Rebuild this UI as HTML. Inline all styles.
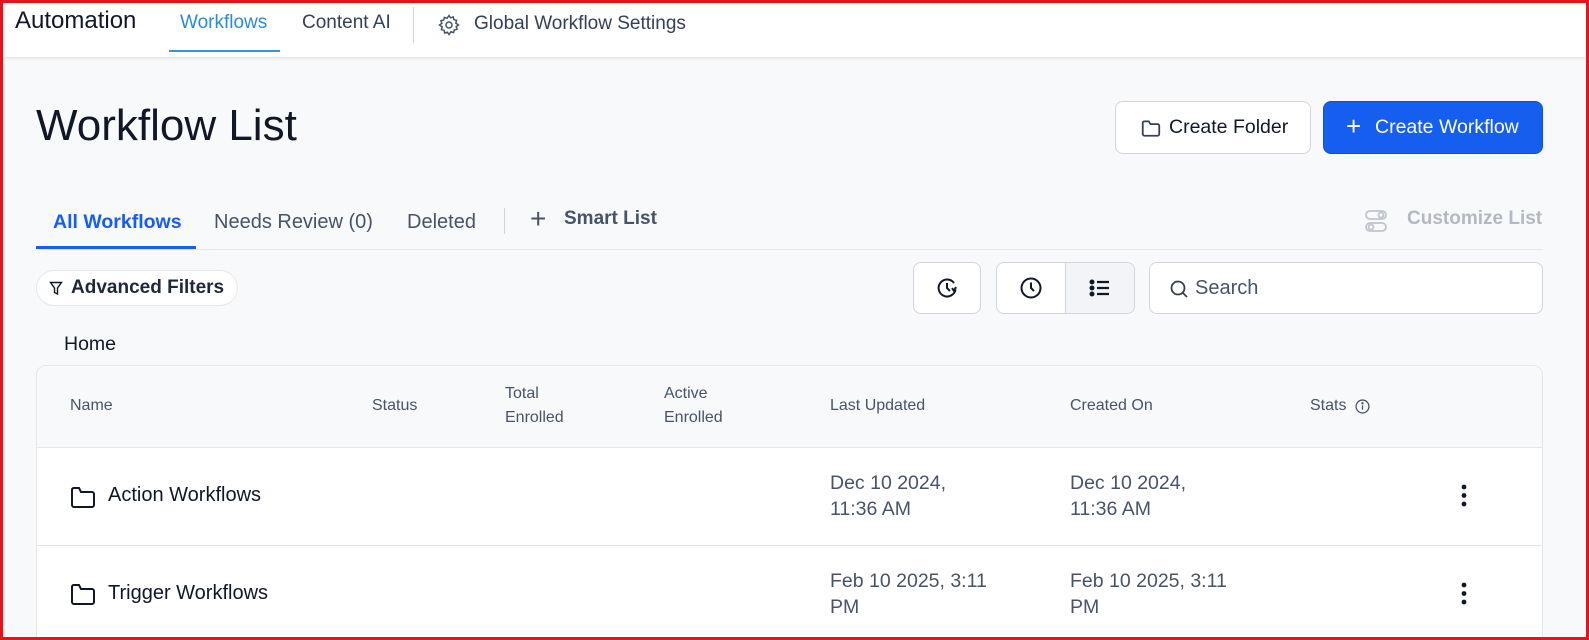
<!DOCTYPE html>
<html style="overflow:hidden;height:640px"><head><meta charset="utf-8"><style>
*{box-sizing:border-box;margin:0;padding:0}
html,body{overflow:hidden}
body{width:1589px;height:640px;background:#f8f9fb;font-family:"Liberation Sans",sans-serif;color:#101828;position:relative}
.a{position:absolute;white-space:nowrap}
.frame{position:absolute;left:0;top:0;width:1589px;height:640px;border:3px solid #e8121b;z-index:10;pointer-events:none}
.hdr{position:absolute;left:0;top:0;width:1589px;height:57px;background:#fff;box-shadow:0 2px 3px rgba(0,0,0,.08)}
.btn{position:absolute;border:1px solid #d0d5dd;background:#fff;border-radius:8px}
.th{font-size:16px;color:#475467;line-height:24px}
.td{font-size:19.5px;color:#475467;line-height:26px}
</style></head><body>
<div class="hdr"></div>
<div class="a" style="left:15px;top:7px;font-size:24px;color:#101828">Automation</div>
<div class="a" style="left:180px;top:12px;font-size:19px;color:#2a8bd0">Workflows</div>
<div class="a" style="left:169px;top:50px;width:111px;height:2px;background:#3a93d5"></div>
<div class="a" style="left:302px;top:12px;font-size:19px;color:#344054">Content AI</div>
<div class="a" style="left:413px;top:7px;width:1px;height:36px;background:#d0d5dd"></div>
<svg class="a" style="left:437px;top:13px" width="24" height="24" viewBox="0 0 24 24" fill="none" stroke="#475467" stroke-width="1.5"><circle cx="12" cy="12" r="3"/><path d="M12 2.5l1.6 2.3 2.7-.8.6 2.7 2.7.7-.8 2.7L21.5 12l-2.3 1.6.8 2.7-2.7.6-.7 2.7-2.7-.8L12 21.5l-1.6-2.3-2.7.8-.6-2.7-2.7-.7.8-2.7L2.5 12l2.3-1.6-.8-2.7 2.7-.6.7-2.7 2.7.8z"/></svg>
<div class="a" style="left:474px;top:13px;font-size:19px;color:#344054">Global Workflow Settings</div>

<div class="a" style="left:36px;top:101px;font-size:44px;color:#101828">Workflow List</div>
<div class="btn" style="left:1115px;top:101px;width:196px;height:53px"></div>
<svg class="a" style="left:1140px;top:117px" width="22" height="22" viewBox="0 0 20 20" fill="none" stroke="#344054" stroke-width="1.6"><path d="M2.5 5V15.5a1.5 1.5 0 001.5 1.5h12a1.5 1.5 0 001.5-1.5V8a1.5 1.5 0 00-1.5-1.5H9.5L8 4H4a1.5 1.5 0 00-1.5 1z"/></svg>
<div class="a" style="left:1169px;top:116px;font-size:19.5px;color:#101828">Create Folder</div>
<div class="a" style="left:1323px;top:101px;width:220px;height:53px;background:#155eef;border-radius:8px;border:1px solid #0f4fd1"></div>
<div class="a" style="left:1346px;top:111px;font-size:26px;color:#fff;font-weight:300">+</div>
<div class="a" style="left:1375px;top:116px;font-size:19.5px;color:#fff">Create Workflow</div>

<div class="a" style="left:53px;top:211px;font-size:19.5px;color:#155eef;font-weight:bold">All Workflows</div>
<div class="a" style="left:36px;top:246px;width:160px;height:3px;background:#155eef"></div>
<div class="a" style="left:214px;top:211px;font-size:20px;color:#475467">Needs Review (0)</div>
<div class="a" style="left:407px;top:211px;font-size:20px;color:#475467">Deleted</div>
<div class="a" style="left:504px;top:208px;width:1px;height:26px;background:#d0d5dd"></div>
<div class="a" style="left:530px;top:203px;font-size:28px;color:#475467;font-weight:300">+</div>
<div class="a" style="left:564px;top:208px;font-size:19px;color:#475467;font-weight:bold">Smart List</div>
<svg class="a" style="left:1364px;top:208px" width="24" height="26" viewBox="0 0 24 26" fill="none" stroke="#c0c4cc" stroke-width="1.8"><rect x="2" y="3" width="20" height="8" rx="4"/><rect x="2" y="15" width="20" height="8" rx="4"/><circle cx="17" cy="7" r="2.5"/><circle cx="7" cy="19" r="2.5"/></svg>
<div class="a" style="left:1407px;top:208px;font-size:19px;color:#b3b8c2;font-weight:bold">Customize List</div>
<div class="a" style="left:37px;top:249px;width:1506px;height:1px;background:#e4e7ec"></div>

<div class="a" style="left:36px;top:270px;width:202px;height:36px;border:1px solid #e4e7ec;border-radius:18px;background:#fff"></div>
<svg class="a" style="left:49px;top:281px" width="14" height="15" viewBox="0 0 14 15" fill="none" stroke="#101828" stroke-width="1.4"><path d="M1.5 1.5h11L8.5 7v6l-3-1.5V7z"/></svg>
<div class="a" style="left:71px;top:277px;font-size:19px;font-weight:bold;color:#1d2939">Advanced Filters</div>

<div class="btn" style="left:913px;top:262px;width:68px;height:52px"></div>
<svg class="a" style="left:935px;top:276px" width="24" height="24" viewBox="0 0 24 24" fill="none" stroke="#101828" stroke-width="2"><path d="M20.5 13.5A8.5 8.5 0 1 1 19 7"/><path d="M12 7v5l3 3"/><path d="M21 11l-2 4-2-3"/></svg>
<div class="btn" style="left:996px;top:262px;width:139px;height:52px;overflow:hidden"><div style="position:absolute;left:68px;top:0;width:71px;height:52px;background:#f2f4f7;border-left:1px solid #d0d5dd"></div></div>
<svg class="a" style="left:1019px;top:276px" width="24" height="24" viewBox="0 0 24 24" fill="none" stroke="#101828" stroke-width="2"><circle cx="12" cy="12" r="9.5"/><path d="M12 6.5V12l3 3"/></svg>
<svg class="a" style="left:1088px;top:276px" width="24" height="24" viewBox="0 0 24 24" fill="none" stroke="#101828" stroke-width="2.2"><circle cx="4" cy="6" r="1.4" fill="#101828"/><circle cx="4" cy="12" r="1.4" fill="#101828"/><circle cx="4" cy="18" r="1.4" fill="#101828"/><path d="M9 6h12M9 12h12M9 18h12"/></svg>
<div class="btn" style="left:1149px;top:262px;width:394px;height:52px"></div>
<svg class="a" style="left:1169px;top:279px" width="20" height="20" viewBox="0 0 20 20" fill="none" stroke="#344054" stroke-width="1.8"><circle cx="9" cy="9" r="6.5"/><path d="M14 14l4 4"/></svg>
<div class="a" style="left:1195px;top:277px;font-size:20px;color:#475467">Search</div>

<div class="a" style="left:64px;top:333px;font-size:19.5px;color:#101828">Home</div>

<div class="a" style="left:36px;top:365px;width:1507px;height:290px;border:1px solid #e4e7ec;border-radius:10px;background:#fff;overflow:hidden">
 <div style="position:absolute;left:0;top:0;right:0;height:82px;background:#f8f9fb;border-bottom:1px solid #e4e7ec"></div>
 <div style="position:absolute;left:0;top:179px;right:0;height:1px;background:#e4e7ec"></div>
</div>
<div class="a th" style="left:70px;top:394px">Name</div>
<div class="a th" style="left:372px;top:394px">Status</div>
<div class="a th" style="left:505px;top:382px">Total<br>Enrolled</div>
<div class="a th" style="left:664px;top:382px">Active<br>Enrolled</div>
<div class="a th" style="left:830px;top:394px">Last Updated</div>
<div class="a th" style="left:1070px;top:394px">Created On</div>
<div class="a th" style="left:1310px;top:394px">Stats</div>
<svg class="a" style="left:1355px;top:399px" width="15" height="15" viewBox="0 0 14 14" fill="none" stroke="#475467" stroke-width="1.2"><circle cx="7" cy="7" r="6"/><path d="M7 6v4"/><circle cx="7" cy="4" r=".5" fill="#475467"/></svg>

<svg class="a" style="left:70px;top:485px" width="26" height="24" viewBox="0 0 26 24" fill="none" stroke="#101828" stroke-width="2"><path d="M2 4.5V20a2 2 0 002 2h18a2 2 0 002-2V9a2 2 0 00-2-2H11L9 3H4a2 2 0 00-2 1.5z"/></svg>
<div class="a" style="left:108px;top:484px;font-size:20px;color:#101828">Action Workflows</div>
<div class="a td" style="left:830px;top:470px">Dec 10 2024,<br>11:36 AM</div>
<div class="a td" style="left:1070px;top:470px">Dec 10 2024,<br>11:36 AM</div>
<svg class="a" style="left:1461px;top:484px" width="6" height="23" viewBox="0 0 6 23" fill="#101828"><circle cx="3" cy="3" r="2.4"/><circle cx="3" cy="11.5" r="2.4"/><circle cx="3" cy="20" r="2.4"/></svg>

<svg class="a" style="left:70px;top:582px" width="26" height="24" viewBox="0 0 26 24" fill="none" stroke="#101828" stroke-width="2"><path d="M2 4.5V20a2 2 0 002 2h18a2 2 0 002-2V9a2 2 0 00-2-2H11L9 3H4a2 2 0 00-2 1.5z"/></svg>
<div class="a" style="left:108px;top:582px;font-size:20px;color:#101828">Trigger Workflows</div>
<div class="a td" style="left:830px;top:568px">Feb 10 2025, 3:11<br>PM</div>
<div class="a td" style="left:1070px;top:568px">Feb 10 2025, 3:11<br>PM</div>
<svg class="a" style="left:1461px;top:582px" width="6" height="23" viewBox="0 0 6 23" fill="#101828"><circle cx="3" cy="3" r="2.4"/><circle cx="3" cy="11.5" r="2.4"/><circle cx="3" cy="20" r="2.4"/></svg>

<div class="frame"></div>
</body></html>
